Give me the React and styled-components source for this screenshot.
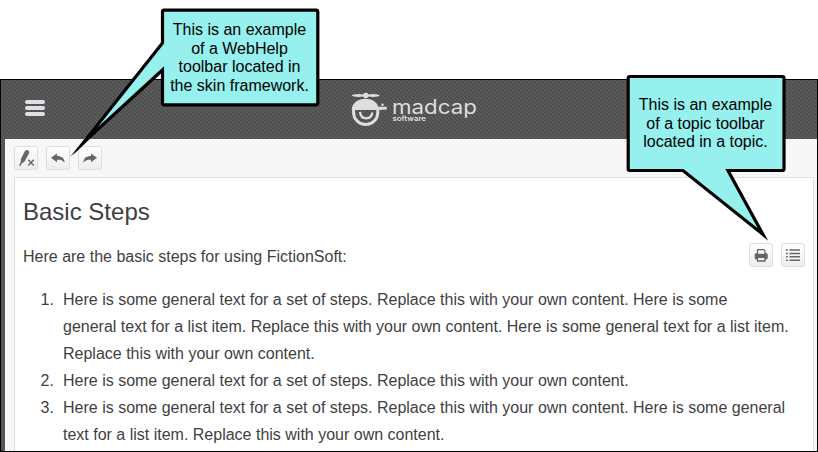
import React from "react";
import styled, { createGlobalStyle } from "styled-components";

const Global = createGlobalStyle`
  *, *::before { box-sizing: border-box; }
  body { margin: 0; background: #fff; font-family: "Liberation Sans", Arial, sans-serif; color: #3f3f3f; }
`;

const Page = styled.div`
  position: relative;
  width: 818px;
  height: 452px;
  padding-top: 79px;
  overflow: hidden;
`;

const Frame = styled.div`
  height: 373px;
  border: 1px solid #000;
  padding-left: 4px;
  background: repeating-linear-gradient(45deg, #5c5c5c 0 1.414px, #4e4e4e 1.414px 2.828px);
  display: flex;
  flex-direction: column;
`;

const Header = styled.header`
  flex: 0 0 59px;
  display: flex;
  align-items: center;
`;

const MenuButton = styled.div`
  display: flex;
  flex-direction: column;
  gap: 2px;
  width: 20px;
  margin: -3px 0 0 20px;
`;

const MenuBar = styled.span`
  height: 4px;
  border-radius: 2px;
  background: #e0e0e6;
`;

const Brand = styled.div`
  display: flex;
  align-items: flex-start;
  height: 36px;
  margin: 1px 0 0 306px;
  color: #dedede;
`;

const BrandSvg = styled.svg`
  display: block;
  width: 128px;
  height: 36px;
`;

const Body = styled.div`
  flex: 1;
  min-height: 0;
  background: #f7f7f7;
  padding: 7px 3px 0 9px;
  display: flex;
  flex-direction: column;
`;

const Toolbar = styled.div`
  display: flex;
  gap: 8px;
`;

const ToolButton = styled.button`
  width: 24px;
  height: 24px;
  padding: 0;
  border: 1px solid #dedede;
  border-radius: 3px;
  background: linear-gradient(#fff, #ededed);
  display: flex;
  color: #666;
`;

const Glyph = styled.svg`
  display: block;
  width: 22px;
  height: 22px;
`;

const Topic = styled.main`
  flex: 1;
  min-height: 0;
  margin-top: 7px;
  border: 1px solid #dedede;
  border-bottom: 0;
  background: #fff;
  padding: 0 8px;
`;

const Title = styled.h1`
  margin: 20px 0 0;
  font-size: 24px;
  line-height: 28px;
  font-weight: 400;
`;

const IntroRow = styled.div`
  display: flex;
  justify-content: space-between;
  align-items: center;
  height: 24px;
  margin-top: 17px;
`;

const Intro = styled.p`
  margin: 4px 0 0;
  font-size: 16px;
  line-height: 24px;
`;

const Steps = styled.ol`
  margin: 19px 0 0;
  padding: 0;
  list-style: none;
  counter-reset: step;
  font-size: 16px;
  line-height: 27px;
  white-space: nowrap;
`;

const Step = styled.li`
  display: flex;
  counter-increment: step;

  &::before {
    content: counter(step) ".";
    flex: 0 0 40px;
    padding-left: 17.5px;
  }
`;

const CalloutLayer = styled.div`
  position: absolute;
  left: ${(p) => p.$x}px;
  top: ${(p) => p.$y}px;
  width: 159px;
  height: 98px;
`;

const CalloutShape = styled.svg`
  position: absolute;
  left: 0;
  top: 0;
  overflow: visible;
`;

const CalloutText = styled.div`
  position: relative;
  padding: ${(p) => p.$top}px 2px 0 0;
  text-align: center;
  font-size: 16px;
  line-height: 18.5px;
  color: #000;
  white-space: nowrap;
`;

function Callout({ x, y, path, tip, top, lines }) {
  return (
    <CalloutLayer $x={x} $y={y}>
      <CalloutShape width="159" height="98">
        <path d={path} fill="#96f0ee" stroke="#000" strokeWidth="3.2" strokeLinejoin="miter" strokeMiterlimit="20" />
        {tip && <path d={tip} fill="#000" />}
      </CalloutShape>
      <CalloutText $top={top}>
        {lines.map((l) => <div key={l}>{l}</div>)}
      </CalloutText>
    </CalloutLayer>
  );
}

const ReplyArrow = ({ flip }) => (
  <Glyph viewBox="0 0 22 22">
    <path transform={flip ? "translate(22 0) scale(-1 1)" : undefined} fill="currentColor"
      d="M4 10.8 L10 6.5 V9 C14.5 9 17.6 11 17.6 15.8 C15.8 13.3 13.5 12.8 10 12.8 V15.3 Z" />
  </Glyph>
);

export default function App() {
  return (
    <Page>
      <Global />
      <Frame>
        <Header>
          <MenuButton><MenuBar /><MenuBar /><MenuBar /></MenuButton>
          <Brand>
            <BrandSvg viewBox="0 0 128 36" fill="currentColor">
              <ellipse cx="7.5" cy="3.5" rx="6.7" ry="1.5" />
              <ellipse cx="22" cy="3.5" rx="6.7" ry="1.5" />
              <circle cx="14.8" cy="3.5" r="2.8" />
              <path d="M0.8 18 C0.8 11 7 6.7 14.5 6.7 C21 6.7 26 10 27.3 14.8 H35.8 V17.5 L28 18 Z" />
              <circle cx="31.5" cy="12.8" r="1.2" />
              <path d="M2.6 17.5 V20.5 A12.1 12 0 0 0 26.8 20.5 V17.5" fill="none" stroke="currentColor" strokeWidth="3" />
              <path d="M9 20 C10 28.3 20 28.3 21.4 20.5" fill="none" stroke="currentColor" strokeWidth="2.3" />
              <text x="41" y="21.7" fontFamily="Inter, sans-serif" fontSize="19.5" fontWeight="400" textLength="85" lengthAdjust="spacingAndGlyphs">madcap</text>
              <text x="41.5" y="28.5" fontFamily="Inter, sans-serif" fontSize="7.3" fontWeight="600" textLength="33.5" lengthAdjust="spacingAndGlyphs">software</text>
            </BrandSvg>
          </Brand>
        </Header>
        <Body>
          <Toolbar>
            <ToolButton aria-label="Remove highlight">
              <Glyph viewBox="0 0 22 22">
                <path fill="currentColor" d="M10.2 3.6 L12 2.9 L14.2 4 L14.2 6 L9.6 14.6 L6.2 17 L5.8 19 L4 18.6 L5.4 16 L6 11.8 Z" />
                <path d="M13.2 12.7 L18.8 18.5 M18.8 12.7 L13.2 18.5" stroke="currentColor" strokeWidth="1.4" />
              </Glyph>
            </ToolButton>
            <ToolButton aria-label="Back"><ReplyArrow /></ToolButton>
            <ToolButton aria-label="Forward"><ReplyArrow flip /></ToolButton>
          </Toolbar>
          <Topic>
            <Title>Basic Steps</Title>
            <IntroRow>
              <Intro>Here are the basic steps for using FictionSoft:</Intro>
              <Toolbar>
                <ToolButton aria-label="Print">
                  <Glyph viewBox="0 0 22 22" fill="none" stroke="currentColor">
                    <rect x="4.7" y="9.3" width="13" height="6.2" rx="1.4" fill="currentColor" stroke="none" />
                    <path fill="#f9f9f9" d="M7.5 10.3 V5.6 H13.7 L14.9 6.8 V10.3 Z" strokeWidth="1.3" />
                    <path fill="#f3f3f3" d="M7.5 13.4 H14.9 V17 H7.5 Z" strokeWidth="1.3" />
                  </Glyph>
                </ToolButton>
                <ToolButton aria-label="Contents">
                  <Glyph viewBox="0 0 22 22" stroke="currentColor" strokeWidth="1.5">
                    <path d="M4 6 H5.8 M7.5 6 H18 M4 9.4 H5.8 M7.5 9.4 H18 M4 12.8 H5.8 M7.5 12.8 H18 M4 16.2 H5.8 M7.5 16.2 H18" />
                  </Glyph>
                </ToolButton>
              </Toolbar>
            </IntroRow>
            <Steps>
              <Step><div>Here is some general text for a set of steps. Replace this with your own content. Here is some<br />general text for a list item. Replace this with your own content. Here is some general text for a list item.<br />Replace this with your own content.</div></Step>
              <Step><div>Here is some general text for a set of steps. Replace this with your own content.</div></Step>
              <Step><div>Here is some general text for a set of steps. Replace this with your own content. Here is some general<br />text for a list item. Replace this with your own content.</div></Step>
            </Steps>
          </Topic>
        </Body>
      </Frame>
      <Callout x={161} y={9} top={12}
        path="M3 1.2 H155 Q156.8 1.2 156.8 3 V94 Q156.8 95.8 155 95.8 H3 Q1.5 95.8 1.5 94 V61 L-77 133 L1.5 34 V3 Q1.5 1.2 3 1.2 Z"
        tip="M-88 146 L-66 118 L-61 120 Z"
        lines={["This is an example", "of a WebHelp", "toolbar located in", "the skin framework."]} />
      <Callout x={627} y={75} top={21}
        path="M3 1.5 H155.3 Q157 1.5 157 3 V94 Q157 95.5 155.3 95.5 H101 L136 159.5 L56 95.5 H3 Q1.2 95.5 1.2 94 V3 Q1.2 1.5 3 1.5 Z"
        lines={["This is an example", "of a topic toolbar", "located in a topic."]} />
    </Page>
  );
}
